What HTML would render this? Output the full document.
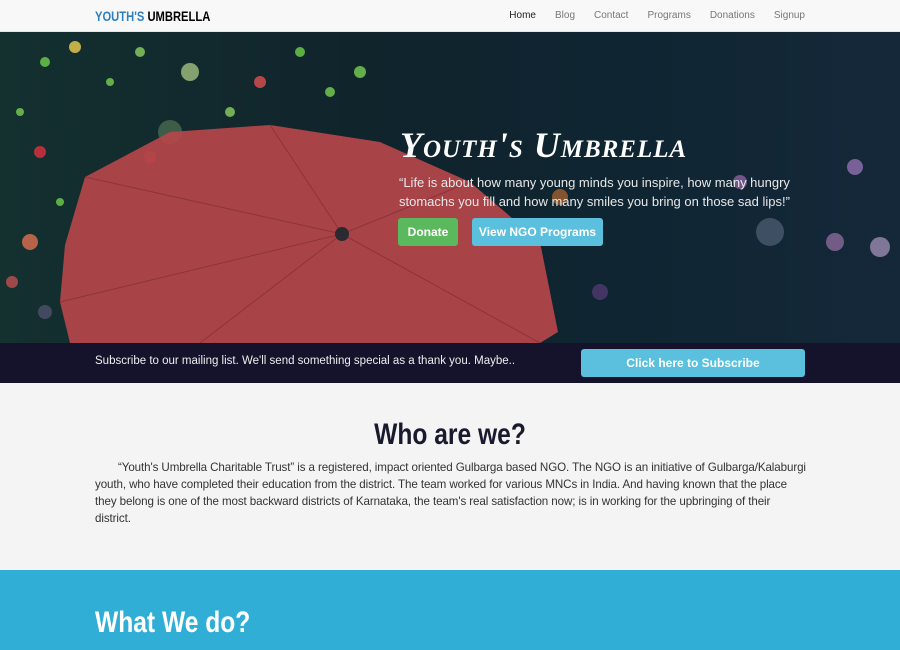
<!DOCTYPE html>
<html><head><style>
*{margin:0;padding:0;box-sizing:border-box}
body{width:900px;height:650px;overflow:hidden;font-family:"Liberation Sans",sans-serif;background:#f3f3f3}
.nav{height:32px;background:#f8f8f8;border-bottom:1px solid #e5e5e5;position:relative}
.logo{position:absolute;left:95px;top:8px;font-weight:bold;font-size:14px;transform:scaleX(0.8);transform-origin:left}
.logo b{color:#2e7fc0}
.links{position:absolute;right:95px;top:10px;font-size:10px;color:#777}
.links span{margin-left:19px}
.hero{position:relative;height:311px;overflow:hidden;background:linear-gradient(90deg,#14302f 0%,#10242c 40%,#0f2532 70%,#15283a 100%)}
.hero h1{position:absolute;left:400px;top:92px;color:#fff;font-family:"Liberation Serif",serif;font-style:italic;font-size:36px;font-weight:bold;letter-spacing:1px;font-variant:small-caps}
.quote{position:absolute;left:399px;top:141px;color:#e8e8e8;font-size:13px;line-height:19px;width:420px}
.btn{position:absolute;top:186px;height:28px;border-radius:3px;color:#fff;font-weight:bold;font-size:12px;text-align:center;line-height:28px}
.sub{height:40px;background:#15122c;position:relative}
.sub p{position:absolute;left:95px;top:12px;color:#eee;font-size:11.5px}
.sub div{position:absolute;left:581px;top:6px;width:224px;height:28px;background:#5bc0de;border-radius:3px;color:#fff;font-weight:bold;font-size:12px;text-align:center;line-height:28px}
.who{height:187px;background:#f4f4f4;position:relative}
.who h2{position:absolute;width:100%;text-align:center;top:35px;font-size:30px;color:#1a1a2e;transform:scaleX(0.82)}
.who p{position:absolute;left:95px;top:76px;width:712px;font-size:11.6px;line-height:17px;color:#333;text-indent:23px;letter-spacing:-0.1px}
.blue{height:80px;background:#31aed6;position:relative}
.blue h2{position:absolute;left:95px;top:36px;color:#fff;font-size:30px;transform:scaleX(0.82);transform-origin:left}
</style></head><body>
<div class="nav"><div class="logo"><b>YOUTH'S</b> UMBRELLA</div>
<div class="links"><span style="color:#222">Home</span><span>Blog</span><span>Contact</span><span>Programs</span><span>Donations</span><span>Signup</span></div></div>
<div class="hero">
<svg width="900" height="311" style="position:absolute;left:0;top:0">
<g opacity="0.8">
<circle cx="45" cy="30" r="5" fill="#6fd04a"/><circle cx="75" cy="15" r="6" fill="#f0d050"/><circle cx="110" cy="50" r="4" fill="#7ad050"/>
<circle cx="140" cy="20" r="5" fill="#8ad060"/><circle cx="190" cy="40" r="9" fill="#a0c080"/><circle cx="260" cy="50" r="6" fill="#e05050"/>
<circle cx="300" cy="20" r="5" fill="#6fd04a"/><circle cx="330" cy="60" r="5" fill="#7ad050"/><circle cx="40" cy="120" r="6" fill="#e03040"/>
<circle cx="150" cy="125" r="6" fill="#e03040"/><circle cx="20" cy="80" r="4" fill="#7ad050"/><circle cx="30" cy="210" r="8" fill="#e07050"/>
<circle cx="170" cy="100" r="12" fill="#4a6a50"/><circle cx="230" cy="80" r="5" fill="#8ad060"/><circle cx="360" cy="40" r="6" fill="#7ad050"/>
<circle cx="60" cy="170" r="4" fill="#6fd04a"/><circle cx="12" cy="250" r="6" fill="#c05050"/><circle cx="45" cy="280" r="7" fill="#505070"/>
<circle cx="770" cy="200" r="14" fill="#4a5a70"/><circle cx="835" cy="210" r="9" fill="#8a6a9a"/>
<circle cx="855" cy="135" r="8" fill="#9070b0"/><circle cx="880" cy="215" r="10" fill="#9a8ab0"/><circle cx="600" cy="260" r="8" fill="#503a70"/>
<circle cx="740" cy="150" r="7" fill="#8a60a0"/><circle cx="560" cy="165" r="8" fill="#a06030"/>
</g>
<polygon points="65,213 85,145 170,100 270,93 380,110 470,150 540,210 558,300 540,311 70,311 60,270" fill="#b5474a" opacity="0.92"/>
<g stroke="#7a2a30" stroke-width="1" opacity="0.6"><line x1="342" y1="202" x2="85" y2="145"/><line x1="342" y1="202" x2="270" y2="93"/><line x1="342" y1="202" x2="470" y2="150"/><line x1="342" y1="202" x2="540" y2="311"/><line x1="342" y1="202" x2="200" y2="311"/><line x1="342" y1="202" x2="60" y2="270"/></g>
<circle cx="342" cy="202" r="7" fill="#2a2a30"/>
</svg>
<h1>Youth's Umbrella</h1>
<div class="quote">“Life is about how many young minds you inspire, how many hungry stomachs you fill and how many smiles you bring on those sad lips!”</div>
<div class="btn" style="left:398px;width:60px;background:#5cb85c">Donate</div>
<div class="btn" style="left:472px;width:131px;background:#5bc0de">View NGO Programs</div>
</div>
<div class="sub"><p>Subscribe to our mailing list. We'll send something special as a thank you. Maybe..</p><div>Click here to Subscribe</div></div>
<div class="who"><h2>Who are we?</h2>
<p>“Youth's Umbrella Charitable Trust” is a registered, impact oriented Gulbarga based NGO. The NGO is an initiative of Gulbarga/Kalaburgi youth, who have completed their education from the district. The team worked for various MNCs in India. And having known that the place they belong is one of the most backward districts of Karnataka, the team's real satisfaction now; is in working for the upbringing of their district.</p></div>
<div class="blue"><h2>What We do?</h2></div>
</body></html>
